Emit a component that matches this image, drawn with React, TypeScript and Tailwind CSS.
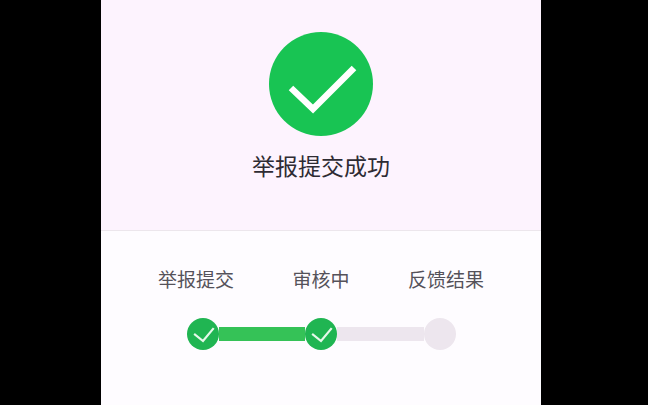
const FONT = "font-['Noto_Sans_CJK_SC','Noto_Sans',sans-serif]"

function Check({ className }: { className: string }) {
  return (
    <svg viewBox="0 0 32 32" className={className} fill="none">
      <path d="M8 16.5L16 23L26 11" stroke="#e6f8ea" strokeWidth="2.2" strokeLinecap="square" />
    </svg>
  )
}

function Dot() {
  return (
    <div className="flex h-8 w-8 shrink-0 items-center justify-center rounded-full bg-[#20b552]">
      <Check className="h-8 w-8" />
    </div>
  )
}

export default function App() {
  return (
    <div className={`flex h-[405px] w-[648px] justify-center overflow-hidden bg-black pr-[6px] ${FONT}`}>
      <div className="flex w-[440px] flex-col bg-white">
        <div className="flex h-[231px] flex-col items-center border-b border-[#ece6ec] bg-[#fdf3fe] pt-8">
          <div className="flex h-[104px] w-[104px] items-center justify-center rounded-full bg-[#18c453]">
            <svg viewBox="0 0 104 104" className="h-[104px] w-[104px]" fill="none">
              <path d="M22 56L44 77L85 36" stroke="white" strokeWidth="6.5" />
            </svg>
          </div>
          <div className="mt-[13px] text-[23px] leading-[32px] text-[#2e2b33]">举报提交成功</div>
        </div>
        <div className="flex flex-1 flex-col bg-[#fefcff]">
          <div className="mt-[34px] flex justify-between px-[57px] text-[19px] leading-[28px] text-[#55525a]">
            <span>举报提交</span>
            <span>审核中</span>
            <span>反馈结果</span>
          </div>
          <div className="mt-[25px] flex items-center justify-center pl-px">
            <Dot />
            <div className="h-[14px] w-[86px] bg-[#35c257]" />
            <Dot />
            <div className="h-[14px] w-[87px] bg-[#ede6ee]" />
            <div className="h-8 w-8 shrink-0 rounded-full bg-[#ede6ee]" />
          </div>
        </div>
      </div>
    </div>
  )
}
